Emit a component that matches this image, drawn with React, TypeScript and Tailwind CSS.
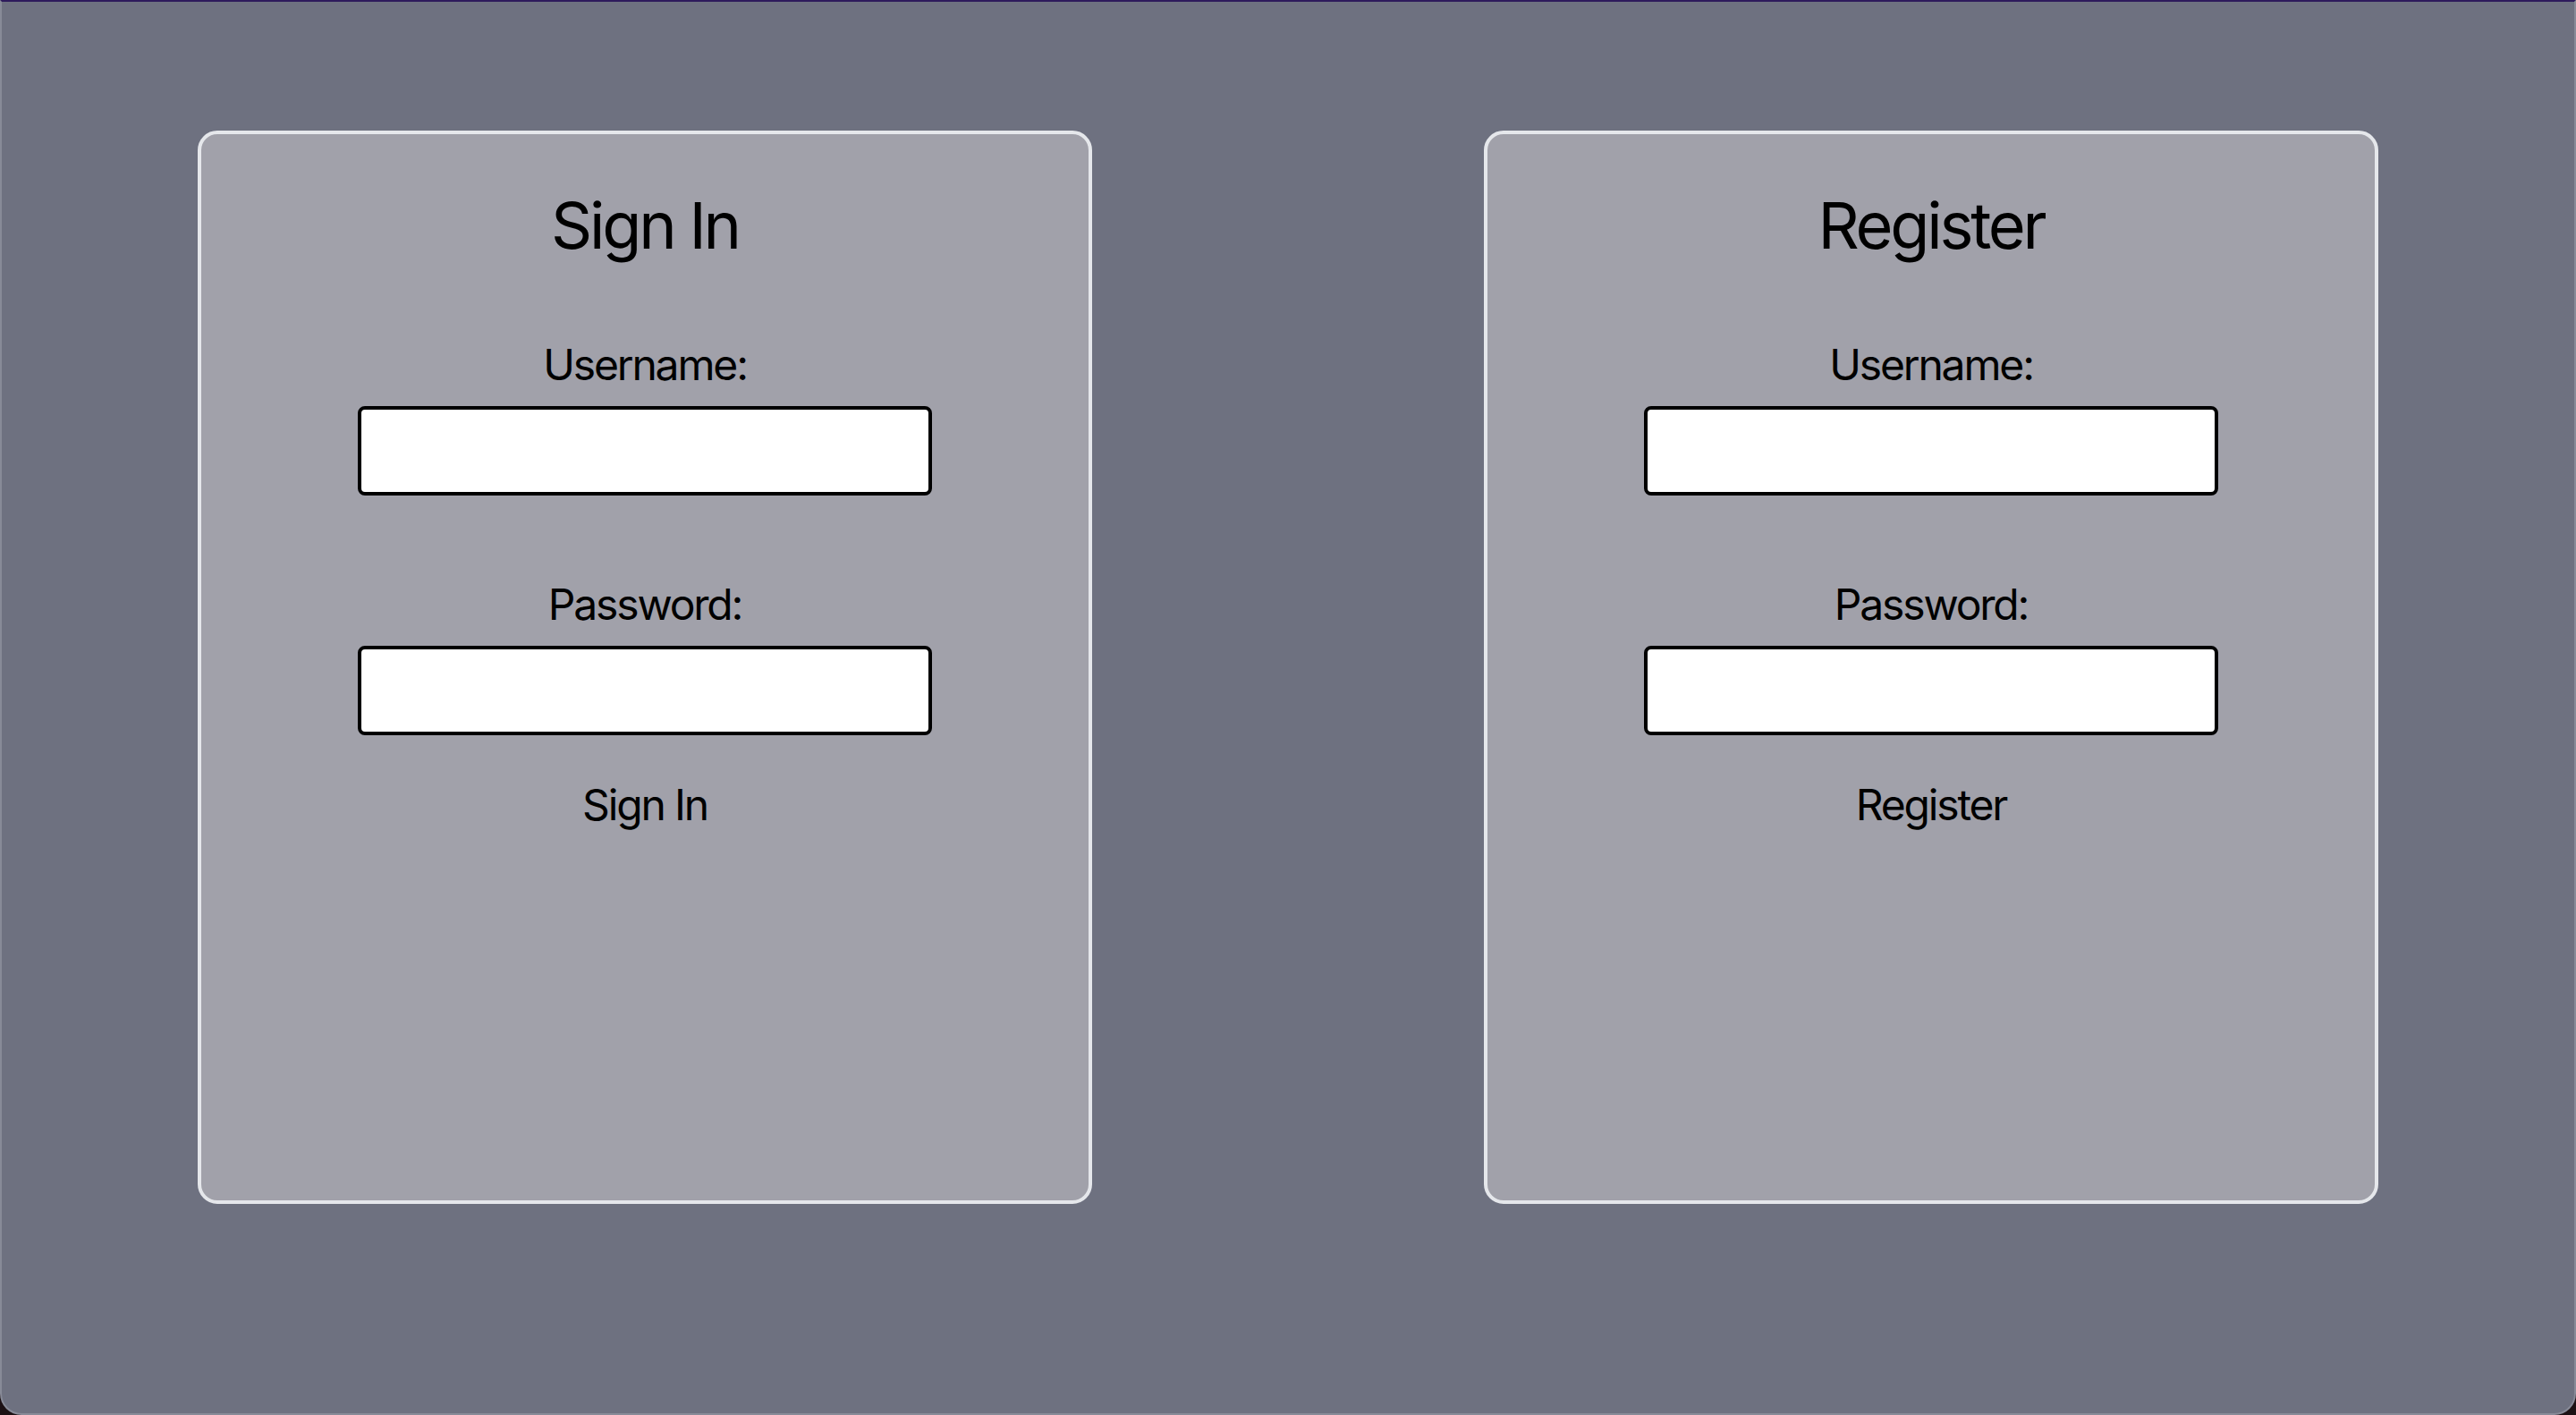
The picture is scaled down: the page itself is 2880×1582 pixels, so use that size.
import React from "react";

function AuthCard({ title, action }: { title: string; action: string }) {
  return (
    <div className="flex h-[1200px] w-[1000px] flex-col items-center rounded-[22px] border-4 border-[#e5e7eb] bg-[#a1a1aa] text-black">
      <h1 className="mt-[66px] text-[72px] leading-none font-normal tracking-[-0.045em]">{title}</h1>
      <label className="mt-[96px] text-[48px] leading-none tracking-[-0.045em]">Username:</label>
      <input
        type="text"
        className="mt-[22px] h-[100px] w-[642px] rounded-[8px] border-4 border-black bg-white px-4 text-[40px] outline-none"
      />
      <label className="mt-[98px] text-[48px] leading-none tracking-[-0.045em]">Password:</label>
      <input
        type="password"
        className="mt-[22px] h-[100px] w-[642px] rounded-[8px] border-4 border-black bg-white px-4 text-[40px] outline-none"
      />
      <button type="button" className="mt-[54px] text-[48px] leading-none tracking-[-0.045em] bg-transparent">
        {action}
      </button>
    </div>
  );
}

export default function App() {
  return (
    <div
      className="h-[1582px] w-[2880px] bg-[#1c1114]"
      style={{ fontFamily: "Inter, 'Noto Sans', sans-serif" }}
    >
      <div className="grid h-full grid-cols-2 rounded-b-[24px] border-x-2 border-b-2 border-t-2 border-[#878a97] border-t-[#2e1a5c] bg-[#6e7180] pt-[144px]">
        <div className="flex justify-center">
          <AuthCard title="Sign In" action="Sign In" />
        </div>
        <div className="flex justify-center">
          <AuthCard title="Register" action="Register" />
        </div>
      </div>
    </div>
  );
}
